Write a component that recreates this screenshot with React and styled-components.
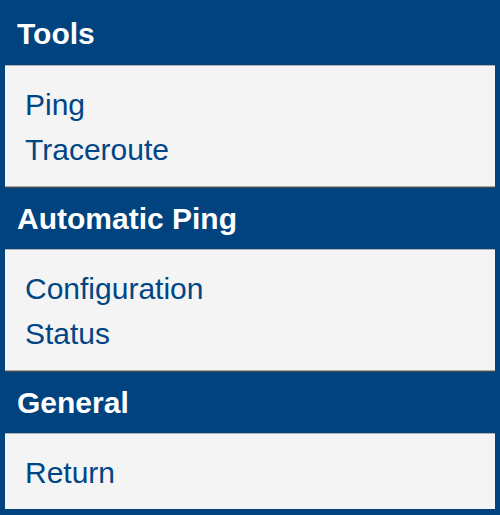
import React from "react";
import styled, { createGlobalStyle } from "styled-components";

const Global = createGlobalStyle`
  html, body {
    margin: 0;
    padding: 0;
    background: #00437e;
  }
  body {
    font-family: "Liberation Sans", Arial, sans-serif;
  }
`;

const Menu = styled.nav`
  display: flex;
  flex-direction: column;
`;

const Heading = styled.h3`
  margin: 0;
  padding: ${(p) => (p.$first ? "17px 17px 14px" : "14px 17px 13px")};
  font-size: 30px;
  line-height: 34px;
  font-weight: bold;
  color: #ffffff;
`;

const Panel = styled.ul`
  list-style: none;
  margin: 0 5px;
  padding: 16px 20px 14px;
  background: #f4f4f4;
  border-top: 1px solid #b4b4b4;
  border-bottom: ${(p) => (p.$last ? "none" : "1px solid #a6a6a6")};
  box-shadow: ${(p) => (p.$last ? "none" : "0 1px 0 #4c4c4c")};
  margin-bottom: ${(p) => (p.$last ? "0" : "1px")};
`;

const Item = styled.li`
  font-size: 30px;
  line-height: 45px;
`;

const Link = styled.a`
  color: #004686;
  text-decoration: none;
`;

const sections = [
  { title: "Tools", items: ["Ping", "Traceroute"] },
  { title: "Automatic Ping", items: ["Configuration", "Status"] },
  { title: "General", items: ["Return"] },
];

export default function App() {
  return (
    <>
      <Global />
      <Menu>
        {sections.map((s, i) => (
          <React.Fragment key={s.title}>
            <Heading $first={i === 0}>{s.title}</Heading>
            <Panel $last={i === sections.length - 1}>
              {s.items.map((it) => (
                <Item key={it}>
                  <Link href="#">{it}</Link>
                </Item>
              ))}
            </Panel>
          </React.Fragment>
        ))}
      </Menu>
    </>
  );
}
